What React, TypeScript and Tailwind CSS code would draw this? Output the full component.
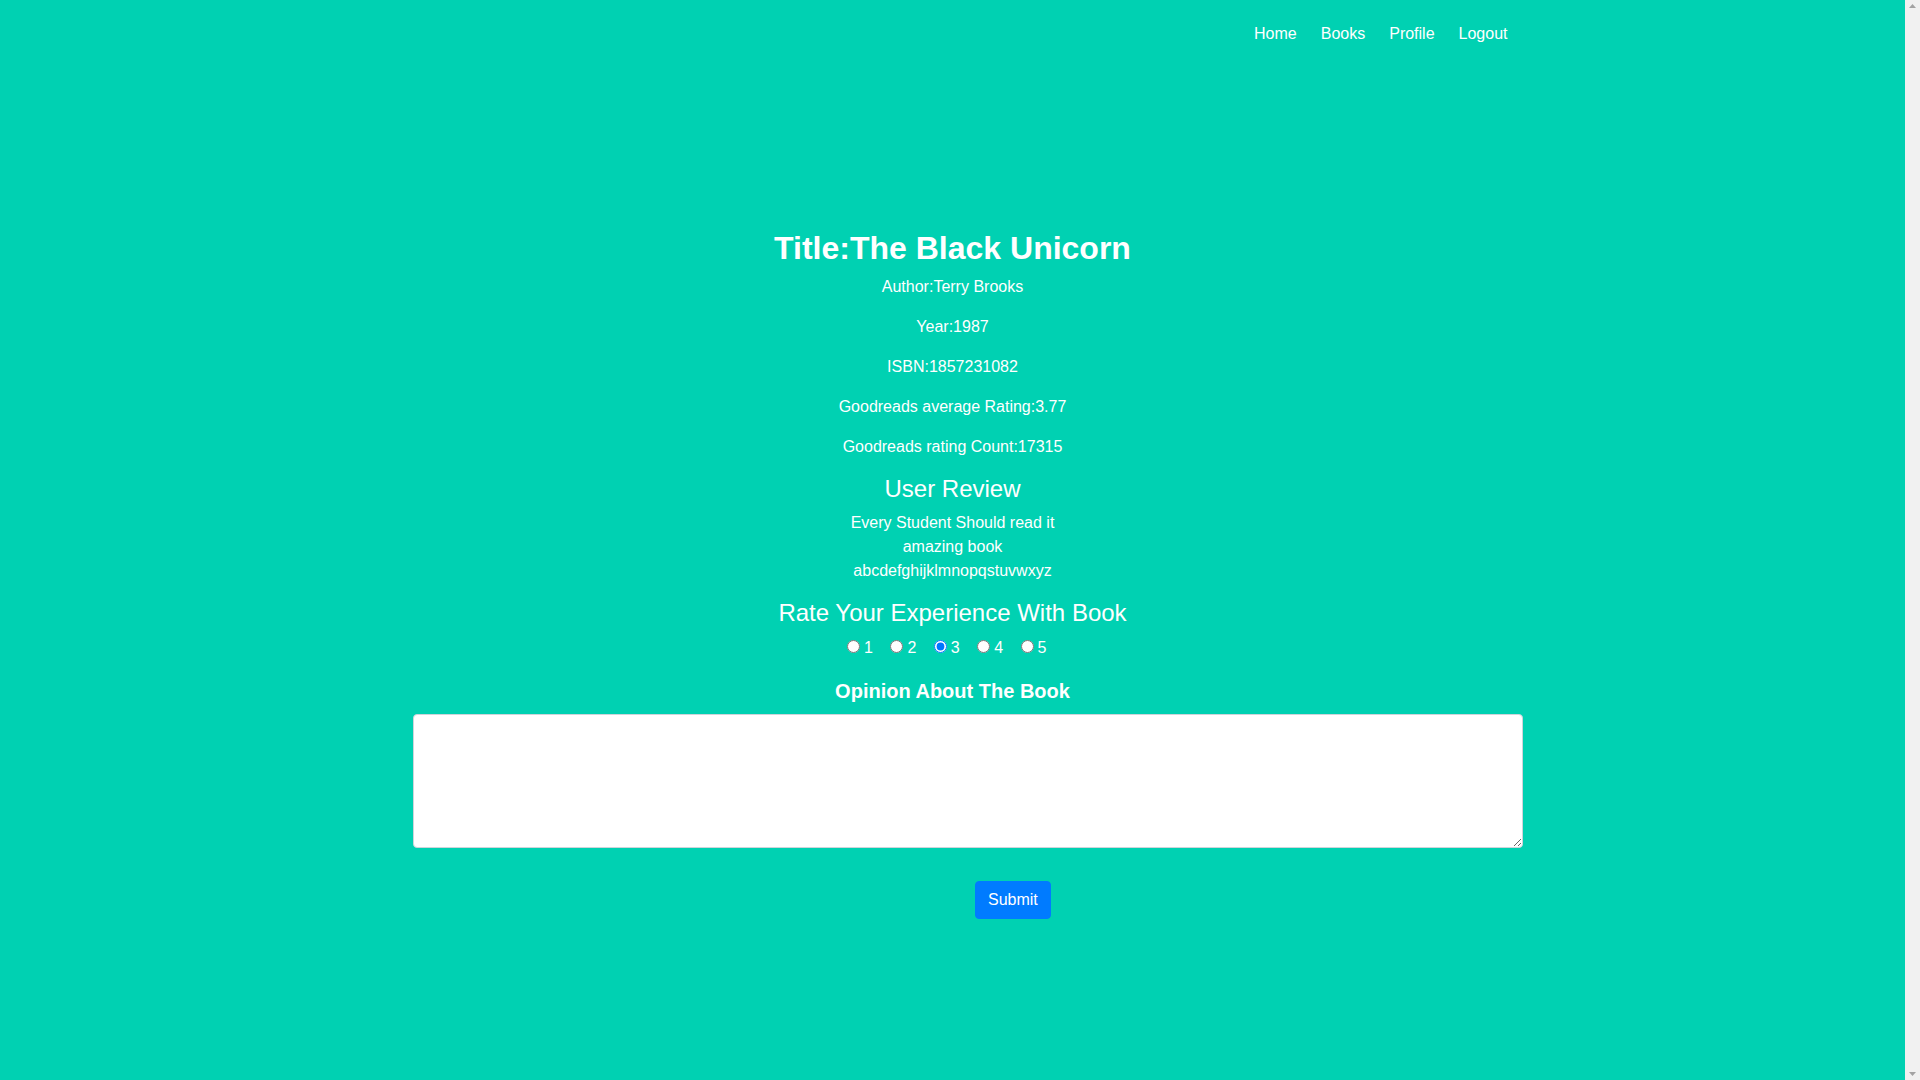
import { useState } from 'react';

const links = ['Home', 'Books', 'Profile', 'Logout'];
const reviews = ['Every Student Should read it', 'amazing book', 'abcdefghijklmnopqstuvwxyz'];
const ratings = [1, 2, 3, 4, 5];

function ScrollTrack() {
  return (
    <div className="flex w-[15px] shrink-0 flex-col items-center justify-between bg-[#f1f1f1] py-[4px]">
      <svg width="7" height="4" viewBox="0 0 7 4">
        <path d="M3.5 0 L7 4 L0 4 Z" fill="#a3a3a3" />
      </svg>
      <svg width="7" height="4" viewBox="0 0 7 4">
        <path d="M0 0 L7 0 L3.5 4 Z" fill="#a3a3a3" />
      </svg>
    </div>
  );
}

export default function App() {
  const [rating, setRating] = useState(3);
  const [opinion, setOpinion] = useState('');

  return (
    <div className="flex h-screen overflow-hidden font-['Liberation_Sans',Arial,sans-serif] text-base leading-6">
      <div className="min-h-[1160px] flex-1 bg-[#00d1b2] text-white">
        {/* Navbar */}
        <nav className="mx-auto w-[1140px] px-[15px] py-[22px]">
          <ul className="flex justify-end gap-6">
            {links.map((link) => (
              <li key={link}>
                <a href="#" className="text-white">
                  {link}
                </a>
              </li>
            ))}
          </ul>
        </nav>

        <div className="mx-auto w-[1140px] px-[15px] pt-[161px] text-center">
          {/* Book details */}
          <h1 className="mb-2 text-[32px] font-bold leading-[1.2]">Title:The Black Unicorn</h1>
          <p className="mb-4">Author:Terry Brooks</p>
          <p className="mb-4">Year:1987</p>
          <p className="mb-4">ISBN:1857231082</p>
          <p className="mb-4">Goodreads average Rating:3.77</p>
          <p className="mb-4">Goodreads rating Count:17315</p>

          {/* Reviews */}
          <h4 className="mb-[7px] text-2xl leading-[1.2]">User Review</h4>
          <div className="mb-4">
            {reviews.map((r) => (
              <div key={r}>{r}</div>
            ))}
          </div>

          {/* Rating */}
          <h4 className="mb-2 text-2xl leading-[1.2]">Rate Your Experience With Book</h4>
          <div className="mb-[19px] flex h-6 items-center justify-center">
            {ratings.map((n) => (
              <label key={n} className="ml-[3px] mr-[14.5px] flex items-center">
                <input
                  type="radio"
                  name="rating"
                  value={n}
                  checked={rating === n}
                  onChange={() => setRating(n)}
                  className="m-0 mb-[3px] h-[13px] w-[13px]"
                />
                <span className="ml-1">{n}</span>
              </label>
            ))}
          </div>

          {/* Opinion */}
          <h5 className="mb-[11px] text-xl font-bold leading-[1.2]">Opinion About The Book</h5>
          <textarea
            value={opinion}
            onChange={(e) => setOpinion(e.target.value)}
            className="ml-[15.5px] block h-[134px] w-[1110px] rounded border border-[#ced4da] bg-white px-3 py-1.5 text-[#495057]"
          />
          <div className="mt-[33px] text-left">
            <button className="ml-[577.5px] rounded border border-[#007bff] bg-[#007bff] px-3 py-1.5 text-white">
              Submit
            </button>
          </div>
        </div>
      </div>
      <ScrollTrack />
    </div>
  );
}
